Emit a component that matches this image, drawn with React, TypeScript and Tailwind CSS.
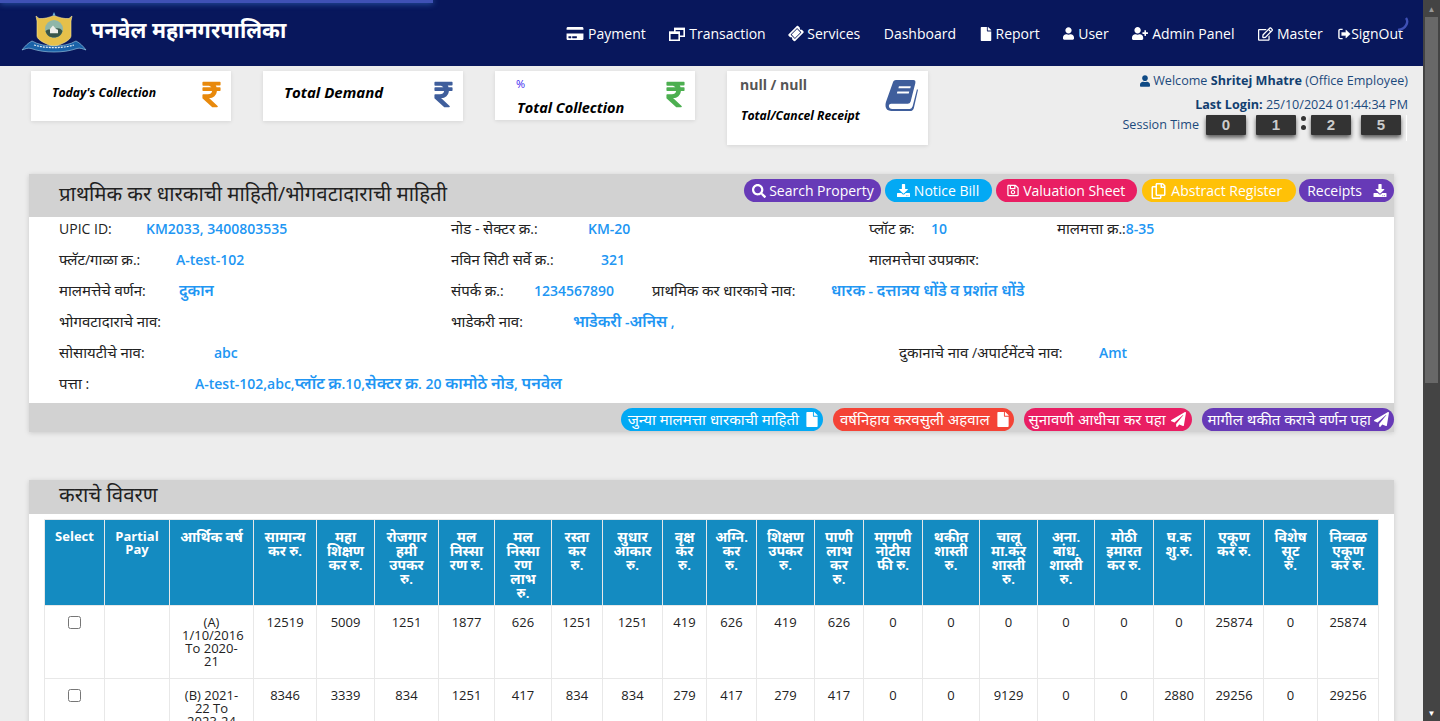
import React from 'react';
import {
  FaCreditCard,
  FaDownload,
  FaFile,
  FaPaperPlane,
  FaRegCopy,
  FaRegEdit,
  FaRegSave,
  FaRupeeSign,
  FaSearch,
  FaTicketAlt,
  FaUser,
  FaUserPlus,
} from 'react-icons/fa';

const TransactionIcon = () => (
  <svg viewBox="0 0 16 14" className="w-[16px] h-[14px]" fill="none" stroke="currentColor" strokeWidth="1.6">
    <path d="M5.8 5V1.8h9.4v7.4H11" />
    <path d="M5 0.6h11v2.4H5z" fill="currentColor" stroke="none" />
    <path d="M0.8 5.4h9.4v7.8H0.8z" />
    <path d="M0 4.6h11v2.4H0z" fill="currentColor" stroke="none" />
  </svg>
);

const navItems = [
  { label: 'Payment', icon: <FaCreditCard className="w-[18px] h-[15px]" /> },
  { label: 'Transaction', icon: <TransactionIcon /> },
  { label: 'Services', icon: <FaTicketAlt className="w-[14px] h-[13px] -rotate-45" /> },
  { label: 'Dashboard', icon: null },
  { label: 'Report', icon: <FaFile className="w-[12px] h-[14px]" /> },
  { label: 'User', icon: <FaUser className="w-[11px] h-[13px]" /> },
  { label: 'Admin Panel', icon: <FaUserPlus className="w-[16px] h-[13px]" /> },
  { label: 'Master', icon: <FaRegEdit className="w-[15px] h-[14px]" /> },
];

// '|' marks where the header cell breaks its lines
const columns = [
  { w: 'w-[60px]', title: 'Select' },
  { w: 'w-[65px]', title: 'Partial|Pay' },
  { w: 'w-[84px]', title: 'आर्थिक वर्ष' },
  { w: 'w-[63px]', title: 'सामान्य|कर रु.' },
  { w: 'w-[58px]', title: 'महा|शिक्षण|कर रु.' },
  { w: 'w-[64px]', title: 'रोजगार|हमी|उपकर|रु.' },
  { w: 'w-[56px]', title: 'मल|निस्सा|रण रु.' },
  { w: 'w-[57px]', title: 'मल|निस्सा|रण|लाभ|रु.' },
  { w: 'w-[51px]', title: 'रस्ता|कर|रु.' },
  { w: 'w-[60px]', title: 'सुधार|आकार|रु.' },
  { w: 'w-[44px]', title: 'वृक्ष|कर|रु.' },
  { w: 'w-[50px]', title: 'अग्नि.|कर|रु.' },
  { w: 'w-[58px]', title: 'शिक्षण|उपकर|रु.' },
  { w: 'w-[49px]', title: 'पाणी|लाभ|कर|रु.' },
  { w: 'w-[59px]', title: 'मागणी|नोटीस|फी रु.' },
  { w: 'w-[57px]', title: 'थकीत|शास्ती|रु.' },
  { w: 'w-[58px]', title: 'चालू|मा.कर|शास्ती|रु.' },
  { w: 'w-[57px]', title: 'अना.|बांध.|शास्ती|रु.' },
  { w: 'w-[59px]', title: 'मोठी|इमारत|कर रु.' },
  { w: 'w-[51px]', title: 'घ.क|शु.रु.' },
  { w: 'w-[59px]', title: 'एकूण|कर रु.' },
  { w: 'w-[54px]', title: 'विशेष|सूट|रु.' },
  { w: 'w-[61px]', title: 'निव्वळ|एकूण|कर रु.' },
];

const rows = [
  {
    year: '(A) 1/10/2016 To 2020-21',
    values: ['12519', '5009', '1251', '1877', '626', '1251', '1251', '419', '626', '419', '626', '0', '0', '0', '0', '0', '0', '25874', '0', '25874'],
  },
  {
    year: '(B) 2021-22 To 2023-24',
    values: ['8346', '3339', '834', '1251', '417', '834', '834', '279', '417', '279', '417', '0', '0', '9129', '0', '0', '2880', '29256', '0', '29256'],
  },
];

// the Devanagari face in the picture runs larger than the latin one
const Deva = ({ text, size }: { text: string; size: string }) => (
  <>
    {text.split(/([\u0900-\u097F]+)/).map((part, i) =>
      i % 2 === 1 ? (
        <span key={i} className={size}>
          {part}
        </span>
      ) : (
        part
      )
    )}
  </>
);

const Field = ({
  label,
  value,
  labelW,
  valueSize = 'text-[15.6px]',
}: {
  label: string;
  value?: string;
  labelW: string;
  valueSize?: string;
}) => (
  <div className="flex">
    <span className={`${labelW} shrink-0 text-[#222]`}>
      <Deva text={label} size="text-[15px]" />
    </span>
    {value && (
      <span className="font-semibold text-[#2196f3]">
        <Deva text={value} size={valueSize} />
      </span>
    )}
  </div>
);

const StatCard = ({ className, children }: { className: string; children: React.ReactNode }) => (
  <div className={`relative bg-white shadow-[0_1px_4px_rgba(0,0,0,0.1)] ${className}`}>{children}</div>
);

const Pill = ({ className, children }: { className: string; children: React.ReactNode }) => (
  <span className={`flex items-center h-[23px] rounded-full text-white text-[14px] whitespace-nowrap ${className}`}>
    {children}
  </span>
);

const Logo = () => (
  <svg viewBox="0 0 66 42" className="w-[66px] h-[42px]">
    <path d="M15 4l3 2.5c5 .5 10-1 15-3 5 2 10 3.500 15 3l3-2.500-1 5v15c0 4-9 8-17 11-8-3-17-7-17-11V9z" fill="#e6c04a" stroke="#f3e29a" strokeWidth="0.6" />
    <path d="M33 0l1.500 3.500h-3z" fill="#6fb3d8" />
    <circle cx="33" cy="17" r="9" fill="#8fb6a8" />
    <path d="M24.500 19c4-3 6 0 8.500-1.500s6-2 8.500 1.500c-1 4.500-4.500 6.500-8.500 6.500s-7.500-2-8.500-6.500z" fill="#39564a" />
    <path d="M29 17l3-3.500 3 3.500 2 .8v3.500h-8z" fill="#eeeeea" />
    <path d="M1 38c3-4 6-7 10-9 6 3.500 14 5 22 5s16-1.500 22-5c4 2 7 5 10 9-3-1-6-2.500-9-1.500-7 2.500-15 3.500-23 3.500s-16-1-23-3.500c-3-1-6 .5-9 1.500z" fill="#1a62a8" stroke="#a6d4ea" strokeWidth="0.6" />
    <path d="M13 33c13 3.500 27 3.500 40 0" fill="none" stroke="#e6eef5" strokeWidth="1.2" strokeDasharray="2 1" />
  </svg>
);

const SignOutIcon = () => (
  <svg viewBox="0 0 14 12" className="w-[13px] h-[12px]" fill="none" stroke="currentColor">
    <path d="M5 1H2.200C1.500 1 1 1.500 1 2.200v7.600c0 .7.5 1.200 1.200 1.200H5" strokeWidth="1.500" />
    <path d="M4 4.300h4.500V1.600L13.200 6l-4.700 4.400V7.700H4z" fill="currentColor" strokeWidth="0.5" />
  </svg>
);

const BookIcon = () => (
  <svg viewBox="0 0 32 30" className="absolute left-[158px] top-[9px] w-[33px] h-[31px] text-[#3f5e9c]" fill="currentColor">
    <path
      fillRule="evenodd"
      d="M8 1.500Q8.600 0 10.500 0H27.500Q30 0 29.400 3L24.800 21Q24.200 23 22 23H6Q3.500 23 3.800 25.500 4.200 28 7 28H24Q26 28 26.800 25.500L31 9 32 9.500 28 27Q27.400 30 24 30H6Q1 30 .5 25.500.2 23.500 1 21ZM13.500 6H25L24.500 8H13ZM12 11H23.500L23 13H11.500Z"
    />
  </svg>
);

export default function App() {
  return (
    <div className="relative flex h-[721px] overflow-hidden bg-[#ededed] font-['Open_Sans','Noto_Sans',sans-serif]">
      {/* page loader leftovers */}
      <div className="absolute left-0 top-0 h-[3px] w-[433px] bg-[#3f51b5] shadow-[0_0_6px_#3f7fd5]" />
      <svg viewBox="0 0 12 14" className="absolute left-[1397px] top-[17px] w-[12px] h-[14px]" fill="none">
        <path d="M9 1C12 5 9 12 1 13" stroke="#3f51b5" strokeWidth="2.400" />
      </svg>

      <div className="flex-1 min-w-0">
        <header className="flex h-[66px] items-center justify-between bg-[#08175c] pl-[21px] pr-[20px]">
          <div className="flex items-center gap-[4px]">
            <Logo />
            <span className="-mt-[6px] text-[21.500px] font-bold text-white">पनवेल महानगरपालिका</span>
          </div>
          <nav className="flex items-center gap-[23.500px] pt-[1px] text-[14px] text-white">
            {navItems.map((item) => (
              <span key={item.label} className="flex items-center gap-[4px]">
                {item.icon}
                {item.label}
              </span>
            ))}
            <span className="-ml-[8px] flex items-center">
              <SignOutIcon />
              SignOut
            </span>
          </nav>
        </header>

        <div className="flex h-[108px] items-start pl-[31px] pr-[15px]">
          <div className="mt-[5px] flex items-start gap-[32px]">
            <StatCard className="h-[50px] w-[200px]">
              <span className="absolute left-[21px] top-[13px] text-[12.200px] font-bold italic text-black">Today's Collection</span>
              <FaRupeeSign className="absolute right-[10px] top-[9px] w-[19px] h-[29px] text-[#e8890c]" />
            </StatCard>
            <StatCard className="h-[50px] w-[200px]">
              <span className="absolute left-[21px] top-[10px] text-[15px] font-bold italic text-black">Total Demand</span>
              <FaRupeeSign className="absolute right-[10px] top-[9px] w-[19px] h-[29px] text-[#3f5e9c]" />
            </StatCard>
            <StatCard className="h-[49px] w-[200px]">
              <span className="absolute left-[21px] top-[5px] text-[11px] text-[#3a1cf0]">%</span>
              <span className="absolute left-[22px] top-[26px] text-[14.500px] font-bold italic text-black">Total Collection</span>
              <FaRupeeSign className="absolute right-[10px] top-[9px] w-[19px] h-[29px] text-[#4caf50]" />
            </StatCard>
            <StatCard className="h-[74px] w-[201px]">
              <span className="absolute left-[13px] top-[3px] text-[14px] font-bold text-[#555]">null / null</span>
              <span className="absolute left-[14px] top-[36px] text-[12.200px] font-bold italic text-black">Total/Cancel Receipt</span>
              <BookIcon />
            </StatCard>
          </div>
          <div className="ml-auto flex flex-col items-end pt-[6px] text-[12.600px] leading-[18px] text-[#1c4a7c]">
            <div className="flex items-center gap-[3px]">
              <FaUser className="w-[10px] h-[12px] text-[#0f4a85]" />
              <span>
                Welcome <b className="font-bold text-[#123f70]">Shritej Mhatre</b> (Office Employee)
              </span>
            </div>
            <div className="mt-[6px]">
              <b className="font-bold text-[#123f70]">Last Login:</b> 25/10/2024 01:44:34 PM
            </div>
            <div className="mr-[1px] mt-[1px] flex items-start border-r border-white pb-[6px] pr-[5px]">
              <span className="mr-[7px] pt-[1px]">Session Time</span>
              <SessionDigits />
            </div>
          </div>
        </div>

        <section className="ml-[29px] w-[1365px] bg-white shadow-[0_1px_5px_rgba(0,0,0,0.15)]">
          <div className="flex h-[43px] items-start justify-between bg-[#d2d2d2] pl-[30px] pt-[5px]">
            <h2 className="text-[20.400px] leading-[28px] text-[#222]">प्राथमिक कर धारकाची माहिती/भोगवटादाराची माहिती</h2>
            <div className="flex items-center">
              <Pill className="bg-[#673ab7] pl-[8px] pr-[7px] gap-[3px]"><FaSearch className="w-[14px] h-[14px]" />Search Property</Pill>
              <Pill className="ml-[4px] bg-[#03a9f4] pl-[12px] pr-[13px] gap-[4px]"><FaDownload className="w-[13px] h-[13px]" />Notice Bill</Pill>
              <Pill className="ml-[4px] bg-[#e91e63] pl-[11px] pr-[12px] gap-[4px]"><FaRegSave className="w-[12px] h-[13px]" />Valuation Sheet</Pill>
              <Pill className="ml-[5px] bg-[#ffc107] pl-[9px] pr-[14px] gap-[5px]"><FaRegCopy className="w-[15px] h-[16px]" />Abstract Register</Pill>
              <Pill className="ml-[3px] bg-[#673ab7] pl-[8px] pr-[7px] gap-[11px]">Receipts<FaDownload className="w-[14px] h-[13px]" /></Pill>
            </div>
          </div>

          <div className="-mt-[4px] flex h-[190px] flex-col pl-[30px] text-[14px] leading-[31px]">
            <div className="flex">
              <div className="w-[392px]"><Field label="UPIC ID:" labelW="w-[87px]" value="KM2033, 3400803535" /></div>
              <div className="w-[418px]"><Field label="नोड - सेक्टर क्र.:" labelW="w-[137px]" value="KM-20" /></div>
              <div className="w-[188px]"><Field label="प्लॉट क्र:" labelW="w-[62px]" value="10" /></div>
              <Field label="मालमत्ता क्र.:" labelW="w-auto" value="8-35" />
            </div>
            <div className="flex">
              <div className="w-[392px]"><Field label="फ्लॅट/गाळा क्र.:" labelW="w-[117px]" value="A-test-102" /></div>
              <div className="w-[418px]"><Field label="नविन सिटी सर्वे क्र.:" labelW="w-[150px]" value="321" /></div>
              <Field label="मालमत्तेचा उपप्रकार:" labelW="w-auto" />
            </div>
            <div className="flex">
              <div className="w-[392px]"><Field label="मालमत्तेचे वर्णन:" labelW="w-[120px]" value="दुकान" /></div>
              <div className="w-[201px]"><Field label="संपर्क क्र.:" labelW="w-[83px]" value="1234567890" /></div>
              <Field label="प्राथमिक कर धारकाचे नाव:" labelW="w-[179px]" value="धारक - दत्तात्रय धोंडे व प्रशांत धोंडे" />
            </div>
            <div className="flex">
              <div className="w-[392px]"><Field label="भोगवटादाराचे नाव:" labelW="w-auto" /></div>
              <Field label="भाडेकरी नाव:" labelW="w-[122px]" value="भाडेकरी -अनिस ," />
            </div>
            <div className="flex">
              <div className="w-[840px]"><Field label="सोसायटीचे नाव:" labelW="w-[155px]" value="abc" /></div>
              <Field label="दुकानाचे नाव /अपार्टमेंटचे नाव:" labelW="w-[200px]" value="Amt" />
            </div>
            <Field
              label="पत्ता :"
              labelW="w-[136px]"
              valueSize="text-[16.200px]"
              value="A-test-102,abc,प्लॉट क्र.10,सेक्टर क्र. 20 कामोठे नोड, पनवेल"
            />
          </div>

          <div className="flex h-[29px] items-start justify-end gap-[10px] bg-[#d2d2d2] pt-[5px] text-[15px]">
            <Pill className="bg-[#03a9f4] pl-[7px] pr-[5px] gap-[7px]"><span className="text-[15px]">जुन्या मालमत्ता धारकाची माहिती</span><FaFile className="w-[12px] h-[15px]" /></Pill>
            <Pill className="bg-[#f44336] pl-[7px] pr-[5px] gap-[7px]"><span className="text-[15px]">वर्षनिहाय करवसुली अहवाल</span><FaFile className="w-[12px] h-[15px]" /></Pill>
            <Pill className="bg-[#e91e63] pl-[5px] pr-[6px] gap-[5px]"><span className="text-[15px]">सुनावणी आधीचा कर पहा</span><FaPaperPlane className="w-[15px] h-[15px]" /></Pill>
            <Pill className="bg-[#673ab7] pl-[6px] pr-[5px] gap-[3px]"><span className="text-[15px]">मागील थकीत कराचे वर्णन पहा</span><FaPaperPlane className="w-[15px] h-[15px]" /></Pill>
          </div>
        </section>

        <section className="ml-[29px] mt-[48px] w-[1365px] bg-white pb-[20px] shadow-[0_1px_5px_rgba(0,0,0,0.15)]">
          <div className="flex h-[34px] items-start bg-[#d2d2d2] pl-[30px]">
            <h2 className="text-[20.400px] leading-[28px] text-[#222]">कराचे विवरण</h2>
          </div>
          <div className="pl-[15px] pt-[5px]">
            <table className="w-[1334px] table-fixed border-collapse text-center text-[13px] leading-[13px]">
              <colgroup>
                {columns.map((col) => (
                  <col key={col.title} className={col.w} />
                ))}
              </colgroup>
              <thead>
                <tr className="h-[86px] bg-[#148bc1] align-top text-white">
                  {columns.map((col) => (
                    <th key={col.title} className="border border-[#e8e8e8] pt-[10px] font-bold">
                      {col.title.split('|').map((line) => (
                        <span key={line} className="block whitespace-nowrap">
                          <Deva text={line} size="text-[14px]" />
                        </span>
                      ))}
                    </th>
                  ))}
                </tr>
              </thead>
              <tbody className="text-[#222]">
                {rows.map((row) => (
                  <tr key={row.year} className="h-[73px] align-top">
                    <td className="border border-[#e8e8e8] pt-[10px]">
                      <input type="checkbox" className="m-0 h-[13px] w-[13px]" />
                    </td>
                    <td className="border border-[#e8e8e8]" />
                    <td className="border border-[#e8e8e8] px-[12px] pt-[10px]">{row.year}</td>
                    {row.values.map((value, i) => (
                      <td key={i} className="border border-[#e8e8e8] pt-[10px]">
                        {value}
                      </td>
                    ))}
                  </tr>
                ))}
              </tbody>
            </table>
          </div>
        </section>
      </div>

      {/* scrollbar */}
      <div className="flex w-[17px] shrink-0 flex-col bg-[#444]">
        <div className="flex h-[17px] items-center justify-center text-[8px] leading-none text-[#999]">▲</div>
        <div className="mx-[2px] h-[366px] bg-[#686868]" />
        <div className="flex-1" />
        <div className="flex h-[17px] items-center justify-center text-[8px] leading-none text-white">▼</div>
      </div>
    </div>
  );
}

function SessionDigits() {
  const box = 'flex h-[20px] w-[40px] items-center justify-center rounded-[1px] bg-[#333] font-["Liberation_Sans"] text-[15px] font-bold text-[#ccc] shadow-[0_3px_4px_rgba(0,0,0,0.6)]';
  return (
    <div className="flex items-start">
      <span className={box}>0</span>
      <span className={`${box} ml-[10px]`}>1</span>
      <span className="mx-[4px] mt-[1px] flex w-[7px] flex-col items-center gap-[4px]">
        <i className="h-[5px] w-[5px] rounded-full bg-[#333]" />
        <i className="h-[5px] w-[5px] rounded-full bg-[#333]" />
      </span>
      <span className={box}>2</span>
      <span className={`${box} ml-[10px]`}>5</span>
    </div>
  );
}
